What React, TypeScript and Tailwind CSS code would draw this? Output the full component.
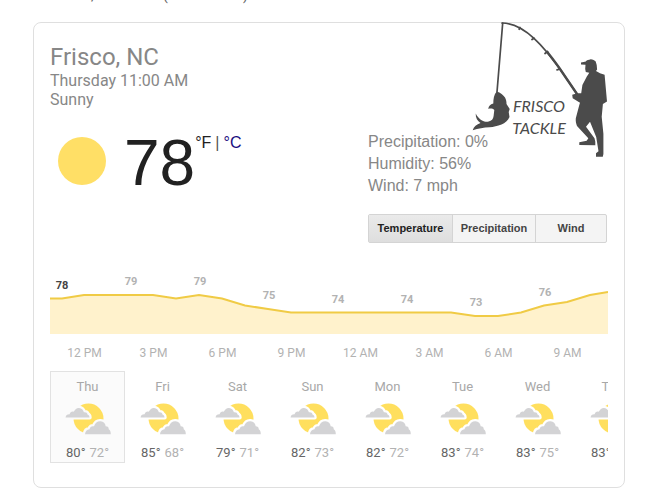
const readings = [
  { x: 12, y: 18, value: 78 },
  { x: 81, y: 14, value: 79 },
  { x: 150, y: 14, value: 79 },
  { x: 219, y: 28, value: 75 },
  { x: 288, y: 32, value: 74 },
  { x: 357, y: 32, value: 74 },
  { x: 426, y: 35, value: 73 },
  { x: 495, y: 25, value: 76 },
];

const hours = ["12 PM", "3 PM", "6 PM", "9 PM", "12 AM", "3 AM", "6 AM", "9 AM"];

const days = [
  { name: "Thu", high: 80, low: 72 },
  { name: "Fri", high: 85, low: 68 },
  { name: "Sat", high: 79, low: 71 },
  { name: "Sun", high: 82, low: 73 },
  { name: "Mon", high: 82, low: 72 },
  { name: "Tue", high: 83, low: 74 },
  { name: "Wed", high: 83, low: 75 },
  { name: "Thu", high: 83, low: 75 },
];

const line =
  "0,27.5 12,27.5 34,24 103,24 126,27.5 149,24 172,27.5 195,34.5 218,38 241,41.5 401,41.5 425,45 448,45 471,41.5 494,34.5 517,31 540,24 558,21";

function PartlyCloudy({ halo }: { halo: string }) {
  return (
    <svg width={46} height={32} viewBox="0 0 46 32" aria-hidden="true">
      <circle cx="23.5" cy="15.5" r="15" fill="#ffdf5e" />
      <g fill="#d3d3d5" stroke={halo} strokeWidth="4.4" strokeLinejoin="round" paintOrder="stroke">
        <path d="M.6 14.400c.2-2.200 1.900-3.400 4-3.200.6-2.300 2.400-3 4.200-2.400C10 6.300 12 4.800 14 5c2.700.2 4.300 2 4.900 4.300 2-.3 3.300.4 3.600 2.100 1.300.3 1.900 1.500 2 3z" />
        <path d="M20 31.200c.2-2.900 2-4.800 4.500-4.900.5-2.400 2.300-3.600 4.500-3 1.300-3.500 3.500-5.200 6.500-5 3.200.2 4.800 2.300 5.200 5 2.100 0 3.200 1.200 3 3 1.500.8 2.100 2.500 2.100 4.900z" />
      </g>
    </svg>
  );
}

function Logo() {
  return (
    <svg
      width={136}
      height={138}
      viewBox="0 0 136 138"
      role="img"
      aria-label="Frisco Tackle"
      className="absolute -top-px right-4"
    >
      <g fill="none" stroke="#4b4b4b" strokeLinecap="round">
        <path d="M30.700 1 25 70" strokeWidth="1.700" />
        <path d="M30 1C42 1 53 8 62 16.300 72 25.500 80 36 88 47l17 25" strokeWidth="1.700" />
        <path d="M75.300 30C80 36 84 41 88 47l17 25" strokeWidth="2.400" />
        <path d="m48 5.500-.8 1.700m14.800 9-2 1.300m15.500 12-2.500 2m15 15.500-3 .8" strokeWidth="1.800" />
      </g>
      <g fill="#4b4b4b">
        <path d="M24.700 69.500c3.800 1.200 6.600 3.500 8.300 6 1 2 1.600 4 1.500 6.500l3.200 5-1 3 .8 5c-1.500 3.500-4.500 6-8 7.500-4 1.500-8 2.500-12 2.700-6 .3-11 1-16.800 3.100 1-3.500 4-6 7.800-7.300-3-2-5-5-4.800-9.500 1.500 3 3.700 5.400 6.300 7 2.200 1.300 4.500 1.500 6.600 1.100 3-.8 4.700-2.600 5-5.600l.7-6c-1.500-1.300-3.600-1.800-6-1 .2-2.800 2-5 5-5.500 0-4.500.6-9 3.400-12z" />
        <path d="M109 40.500c2-.4 3.500-.6 4.800-1 1-1.500 3-1.500 4.900-2.200 2 .3 4 1 5 2.200l1 3.500.4 4.500-1.100 1.500 4 2.300 4.600 1.500 1 11.200 1.400 15.500-4.100 2.500-1.200 12.700 1.700 17V132l-.6 2.700H124v-3.400l2.500-2-2.300-14.300-6.200-15.300-4 5 8.500 11.500.8 3.500v3.500l-16-.2v-2.700l7.400-1.500 1.600-2.500L105 104c-1-2.500-1.500-5-1.200-7.700l3.500-13.300.7-2.300-7.300-4.400-.5-3.500 5.100-1.600 3.900.1 1.200-8.300 4.300-8.300 2.600-4-3.500-.8-.6-3 .3-4.200-4.500-.2z" />
        <g
          fontFamily="Lato, sans-serif"
          fontSize="16"
          fontStyle="italic"
          textAnchor="middle"
        >
          <text x="67" y="90">
            FRISCO
          </text>
          <text x="67" y="112">
            TACKLE
          </text>
        </g>
      </g>
    </svg>
  );
}

export default function App() {
  return (
    <main className="bg-white pr-[41px] pl-[33px] font-['Roboto',sans-serif] text-[#878787]">
      <div className="h-[22px] overflow-hidden" aria-hidden="true">
        <div className="-mt-[13px] flex pl-[58px] text-sm leading-4 text-[#666]">
          <span className="w-[72px]">,</span>
          <span className="w-20">(</span>
          <span>)</span>
        </div>
      </div>

      <section className="relative rounded-lg border border-[#dfdfdf] px-4 pt-5 pb-6">
        <h1 className="text-2xl leading-7">Frisco, NC</h1>
        <p className="text-base leading-[19px]">Thursday 11:00 AM</p>
        <p className="text-base leading-[19px]">Sunny</p>
        <Logo />

        <div className="mt-[22px] flex items-start justify-between font-['Liberation_Sans',sans-serif]">
          <div className="flex items-start pl-2">
            <div className="mt-1.5 size-12 rounded-full bg-[#ffdf66]" />
            <span className="ml-[18px] text-[64px] leading-16 text-[#212121]">78</span>
            <span className="flex gap-1 text-base leading-6 text-[#212121]">
              °F <span className="text-[#555]">|</span>
              <a href="#celsius" className="text-[#1a0d80]">
                °C
              </a>
            </span>
          </div>
          <div className="w-60">
            <div className="text-base leading-[22px]">
              <p>Precipitation: 0%</p>
              <p>Humidity: 56%</p>
              <p>Wind: 7 mph</p>
            </div>
            <div className="mt-[17px] mr-px flex h-[29px] rounded-xs border border-[#d4d4d4] bg-[#f4f4f4] text-[11px] font-bold text-[#444]">
              <button className="w-[83px] bg-linear-to-b from-[#eaeaea] to-[#dedede] text-[#222]">
                Temperature
              </button>
              <button className="w-[84px] border-x border-[#d4d4d4]">Precipitation</button>
              <button className="flex-1">Wind</button>
            </div>
          </div>
        </div>

        <svg
          viewBox="0 0 558 63"
          className="mt-7 w-full"
          role="img"
          aria-label="Hourly temperature"
        >
          <polygon points={`0,63 ${line} 558,63`} fill="#fff2cc" />
          <polyline points={line} fill="none" stroke="#f0cb45" strokeWidth="2" />
          {readings.map(({ x, y, value }) => (
            <text
              key={x}
              x={x}
              y={y}
              textAnchor="middle"
              fontSize="11"
              fontWeight="700"
              fill={x === 12 ? "#444" : "#b2b2b2"}
            >
              {value}
            </text>
          ))}
        </svg>

        <ul className="mt-[11px] flex overflow-hidden text-xs leading-4 text-[#b2b2b2]">
          {hours.map((hour) => (
            <li key={hour} className="w-[69px] shrink-0 text-center">
              {hour}
            </li>
          ))}
        </ul>

        <ul className="mt-2.5 flex overflow-hidden text-[13px] leading-4">
          {days.map(({ name, high, low }, i) => (
            <li
              key={i}
              className={`flex h-[92px] w-[75px] shrink-0 flex-col items-center border pt-[7px] ${
                i === 0 ? "border-[#e2e2e2] bg-[#fbfbfb]" : "border-transparent"
              }`}
            >
              <span className="text-[#a8a8a8]">{name}</span>
              <div className="mt-2">
                <PartlyCloudy halo={i === 0 ? "#fbfbfb" : "#fff"} />
              </div>
              <span className="mt-2.5 flex gap-1 text-[#b2b2b2]">
                <span className="text-[#666]">{high}°</span>
                {low}°
              </span>
            </li>
          ))}
        </ul>
      </section>
    </main>
  );
}
